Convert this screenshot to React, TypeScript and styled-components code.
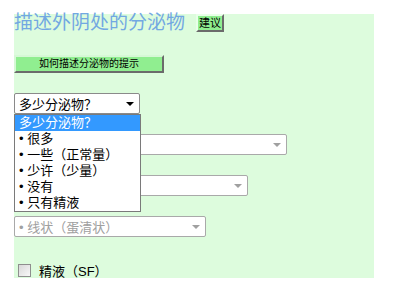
import styled, { createGlobalStyle } from 'styled-components';

const cjk = `"Liberation Sans", "Noto Sans CJK SC", sans-serif`;

const GlobalStyle = createGlobalStyle`
  html, body {
    margin: 0;
    padding: 0;
    background: #ffffff;
    font-family: ${cjk};
    text-spacing-trim: space-all;
  }
`;

const options = ['很多', '一些（正常量）', '少许（少量）', '没有', '只有精液'];

function App() {
  return (
    <>
      <GlobalStyle />
      <Page>
        <Panel>
          <Header>
            <Title>描述外阴处的分泌物</Title>
            <BevelButton>建议</BevelButton>
          </Header>
          <HintButton>如何描述分泌物的提示</HintButton>
          <Fields>
            <SelectWrap>
              <SelectBox $width={126}>
                <span>多少分泌物？</span>
                <Arrow />
              </SelectBox>
              <DropList>
                <Option $active>多少分泌物？</Option>
                {options.map((o) => (
                  <Option key={o}>• {o}</Option>
                ))}
              </DropList>
            </SelectWrap>
            <SelectBox $width={273} $disabled>
              <span />
              <Arrow $disabled />
            </SelectBox>
            <SelectBox $width={234} $disabled>
              <span />
              <Arrow $disabled />
            </SelectBox>
            <SelectBox $width={192} $disabled>
              <span>• 线状（蛋清状）</span>
              <Arrow $disabled />
            </SelectBox>
          </Fields>
          <CheckRow>
            <CheckBox />
            <span>精液（SF）</span>
          </CheckRow>
        </Panel>
      </Page>
    </>
  );
}

const Page = styled.div`
  padding: 14px 0 0 14px;
`;

const Panel = styled.div`
  width: 360px;
  height: 264px;
  background: #ddfcdd;
  display: flex;
  flex-direction: column;
  align-items: flex-start;
`;

const Header = styled.div`
  display: flex;
  align-items: flex-start;
  gap: 11px;
  height: 19px;
`;

const Title = styled.div`
  font-size: 19px;
  line-height: 19px;
  color: #72a8e2;
  margin-top: -1px;
  white-space: nowrap;
`;

const BevelButton = styled.div`
  box-sizing: border-box;
  width: 28px;
  height: 18px;
  background: #90ee90;
  border: 2px solid;
  border-color: #e8ffe8 #6b6b6b #6b6b6b #e8ffe8;
  font-size: 11px;
  line-height: 14px;
  text-align: center;
  color: #000;
`;

const HintButton = styled.div`
  box-sizing: border-box;
  margin-top: 23px;
  width: 150px;
  height: 18px;
  background: #90ee90;
  border: 2px solid;
  border-color: #d6f8d6 #6b6b6b #6b6b6b #d6f8d6;
  font-size: 10px;
  line-height: 14px;
  text-align: center;
  color: #000;
`;

const Fields = styled.div`
  margin-top: 20px;
  display: flex;
  flex-direction: column;
  gap: 20px;
`;

const SelectWrap = styled.div`
  position: relative;
  z-index: 2;
`;

const SelectBox = styled.div<{ $width: number; $disabled?: boolean }>`
  box-sizing: border-box;
  width: ${(p) => p.$width}px;
  height: 21px;
  background: #ffffff;
  border: 1px solid ${(p) => (p.$disabled ? '#a9a9a9' : '#8a8a8a')};
  border-radius: 2px;
  display: flex;
  align-items: center;
  justify-content: space-between;
  padding: 0 4px 0 4px;
  font-size: 13px;
  color: ${(p) => (p.$disabled ? '#a0a0a0' : '#000')};
  white-space: nowrap;
`;

const Arrow = styled.div<{ $disabled?: boolean }>`
  width: 0;
  height: 0;
  border-left: 4px solid transparent;
  border-right: 4px solid transparent;
  border-top: 4px solid ${(p) => (p.$disabled ? '#a0a0a0' : '#000')};
  margin-right: 1px;
`;

const DropList = styled.div`
  position: absolute;
  top: 21px;
  left: 0;
  width: 127px;
  box-sizing: border-box;
  background: #ffffff;
  border: 1px solid #7a7a7a;
`;

const Option = styled.div<{ $active?: boolean }>`
  height: 16px;
  line-height: 16px;
  padding-left: 4px;
  font-size: 13px;
  white-space: nowrap;
  background: ${(p) => (p.$active ? '#3399ff' : '#fff')};
  color: ${(p) => (p.$active ? '#fff' : '#000')};
`;

const CheckRow = styled.div`
  margin-top: 24px;
  margin-left: 4px;
  display: flex;
  align-items: center;
  gap: 8px;
  font-size: 13px;
  color: #000;
`;

const CheckBox = styled.div`
  box-sizing: border-box;
  width: 13px;
  height: 13px;
  border: 1px solid #8e8e8e;
  background: linear-gradient(135deg, #d8d8d8, #f8f8f8);
`;

export default App;
